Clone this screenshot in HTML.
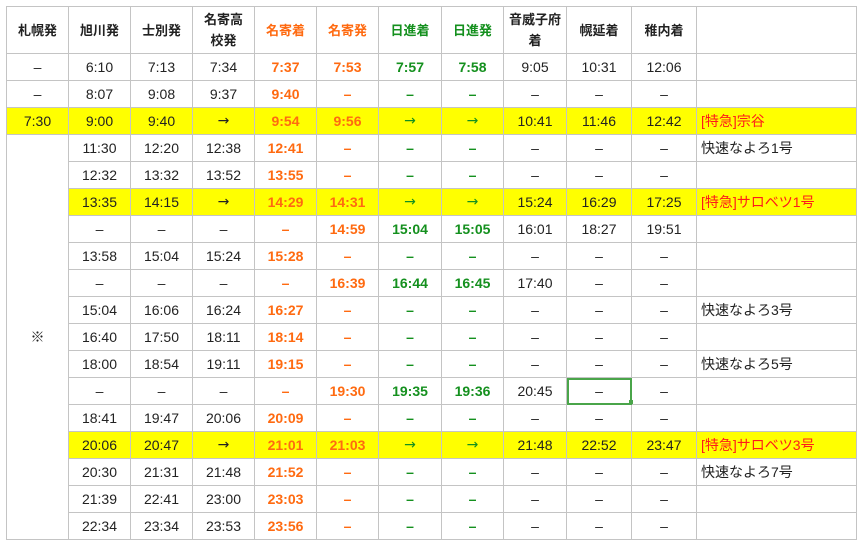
<!DOCTYPE html>
<html><head><meta charset="utf-8"><style>
body{margin:0;background:#fff;font-family:"Liberation Sans","Noto Sans CJK JP",sans-serif;}
table{position:absolute;left:6px;top:6px;border-collapse:collapse;table-layout:fixed;width:850px;font-size:14px;color:#222;}
td,th{border:1px solid #c4c4c4;text-align:center;padding:0;height:26px;white-space:nowrap;overflow:hidden;}
th{height:46px;font-size:13px;font-weight:bold;line-height:21px;white-space:normal;}
.o{color:#ff6a10;font-weight:bold}
.g{color:#14901e;font-weight:bold}
.ga{color:#14901e}
.y td{background:#ffff00}
.n{text-align:left;padding-left:4px;font-size:14px}
.r{color:#ff1a1a}
.sel{outline:2px solid #4aa54a;outline-offset:-2px;position:relative}
.a{font-family:"DejaVu Sans",sans-serif;font-size:14px}
</style></head><body>
<table>
<colgroup><col style="width:62px"><col style="width:62px"><col style="width:62px"><col style="width:62px"><col style="width:62px"><col style="width:62px"><col style="width:63px"><col style="width:62px"><col style="width:63px"><col style="width:65px"><col style="width:65px"><col style="width:160px"></colgroup>
<tr><th>札幌発</th><th>旭川発</th><th>士別発</th><th>名寄高<br>校発</th><th class="o">名寄着</th><th class="o">名寄発</th><th class="g">日進着</th><th class="g">日進発</th><th>音威子府<br>着</th><th>幌延着</th><th>稚内着</th><th></th></tr>
<tr><td>–</td><td>6:10</td><td>7:13</td><td>7:34</td><td class="o">7:37</td><td class="o">7:53</td><td class="g">7:57</td><td class="g">7:58</td><td>9:05</td><td>10:31</td><td>12:06</td><td></td></tr>
<tr><td>–</td><td>8:07</td><td>9:08</td><td>9:37</td><td class="o">9:40</td><td class="o">–</td><td class="g">–</td><td class="g">–</td><td>–</td><td>–</td><td>–</td><td></td></tr>
<tr class="y"><td>7:30</td><td>9:00</td><td>9:40</td><td class="a">→</td><td class="o">9:54</td><td class="o">9:56</td><td class="ga a">→</td><td class="ga a">→</td><td>10:41</td><td>11:46</td><td>12:42</td><td class="n r">[特急]宗谷</td></tr>
<tr><td rowspan="15" style="background:#fff">※</td><td>11:30</td><td>12:20</td><td>12:38</td><td class="o">12:41</td><td class="o">–</td><td class="g">–</td><td class="g">–</td><td>–</td><td>–</td><td>–</td><td class="n">快速なよろ1号</td></tr>
<tr><td>12:32</td><td>13:32</td><td>13:52</td><td class="o">13:55</td><td class="o">–</td><td class="g">–</td><td class="g">–</td><td>–</td><td>–</td><td>–</td><td></td></tr>
<tr class="y"><td>13:35</td><td>14:15</td><td class="a">→</td><td class="o">14:29</td><td class="o">14:31</td><td class="ga a">→</td><td class="ga a">→</td><td>15:24</td><td>16:29</td><td>17:25</td><td class="n r">[特急]サロベツ1号</td></tr>
<tr><td>–</td><td>–</td><td>–</td><td class="o">–</td><td class="o">14:59</td><td class="g">15:04</td><td class="g">15:05</td><td>16:01</td><td>18:27</td><td>19:51</td><td></td></tr>
<tr><td>13:58</td><td>15:04</td><td>15:24</td><td class="o">15:28</td><td class="o">–</td><td class="g">–</td><td class="g">–</td><td>–</td><td>–</td><td>–</td><td></td></tr>
<tr><td>–</td><td>–</td><td>–</td><td class="o">–</td><td class="o">16:39</td><td class="g">16:44</td><td class="g">16:45</td><td>17:40</td><td>–</td><td>–</td><td></td></tr>
<tr><td>15:04</td><td>16:06</td><td>16:24</td><td class="o">16:27</td><td class="o">–</td><td class="g">–</td><td class="g">–</td><td>–</td><td>–</td><td>–</td><td class="n">快速なよろ3号</td></tr>
<tr><td>16:40</td><td>17:50</td><td>18:11</td><td class="o">18:14</td><td class="o">–</td><td class="g">–</td><td class="g">–</td><td>–</td><td>–</td><td>–</td><td></td></tr>
<tr><td>18:00</td><td>18:54</td><td>19:11</td><td class="o">19:15</td><td class="o">–</td><td class="g">–</td><td class="g">–</td><td>–</td><td>–</td><td>–</td><td class="n">快速なよろ5号</td></tr>
<tr><td>–</td><td>–</td><td>–</td><td class="o">–</td><td class="o">19:30</td><td class="g">19:35</td><td class="g">19:36</td><td>20:45</td><td class="sel">–</td><td>–</td><td></td></tr>
<tr><td>18:41</td><td>19:47</td><td>20:06</td><td class="o">20:09</td><td class="o">–</td><td class="g">–</td><td class="g">–</td><td>–</td><td>–</td><td>–</td><td></td></tr>
<tr class="y"><td>20:06</td><td>20:47</td><td class="a">→</td><td class="o">21:01</td><td class="o">21:03</td><td class="ga a">→</td><td class="ga a">→</td><td>21:48</td><td>22:52</td><td>23:47</td><td class="n r">[特急]サロベツ3号</td></tr>
<tr><td>20:30</td><td>21:31</td><td>21:48</td><td class="o">21:52</td><td class="o">–</td><td class="g">–</td><td class="g">–</td><td>–</td><td>–</td><td>–</td><td class="n">快速なよろ7号</td></tr>
<tr><td>21:39</td><td>22:41</td><td>23:00</td><td class="o">23:03</td><td class="o">–</td><td class="g">–</td><td class="g">–</td><td>–</td><td>–</td><td>–</td><td></td></tr>
<tr><td>22:34</td><td>23:34</td><td>23:53</td><td class="o">23:56</td><td class="o">–</td><td class="g">–</td><td class="g">–</td><td>–</td><td>–</td><td>–</td><td></td></tr>
</table>
<div style="position:absolute;left:629px;top:400px;width:4px;height:4px;background:#4aa54a"></div>
</body></html>
